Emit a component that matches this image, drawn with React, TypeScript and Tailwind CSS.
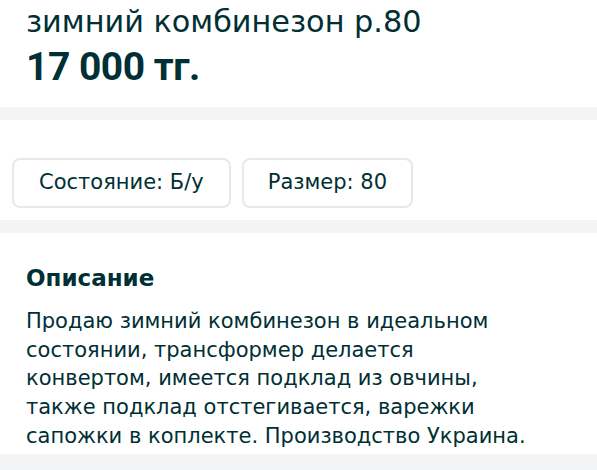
export default function App() {
    const font = { fontFamily: '"DejaVu Sans", "Noto Sans", sans-serif' };

    return (
        <div className="w-[597px] h-[470px] overflow-hidden bg-[#f2f4f5] text-[#002f34]" style={font}>
            {/* Title + price */}
            <div className="bg-white h-[107px] px-[26px] pt-[2px]">
                <h1 className="text-[30.3px] leading-[40px] font-normal">зимний комбинезон р.80</h1>
                <div className="text-[39px] leading-[44px] font-bold mt-[3px] tracking-[-0.5px]" style={{ fontFamily: 'Roboto, "Noto Sans", sans-serif' }}>
                    17 000 тг.
                </div>
            </div>

            {/* Params */}
            <div className="bg-white h-[100px] mt-[13px] px-[12px] pt-[38px] flex gap-[11px]">
                <div className="h-[50px] px-[25px] flex items-center border-2 border-[#e8e8e8] rounded-[8px] text-[21px]">
                    Состояние: Б/у
                </div>
                <div className="h-[50px] px-[24px] flex items-center border-2 border-[#e8e8e8] rounded-[8px] text-[21px]">
                    Размер: 80
                </div>
            </div>

            {/* Description */}
            <div className="bg-white h-[221px] mt-[13px] px-[26px] pt-[31px]">
                <h2 className="text-[23px] leading-[28px] font-bold">Описание</h2>
                <p className="mt-[15px] text-[21px] leading-[28.7px] w-[500px]">
                    Продаю зимний комбинезон в идеальном состоянии, трансформер делается конвертом, имеется подклад из овчины, также подклад отстегивается, варежки сапожки в коплекте. Производство Украина.
                </p>
            </div>
        </div>
    );
}
